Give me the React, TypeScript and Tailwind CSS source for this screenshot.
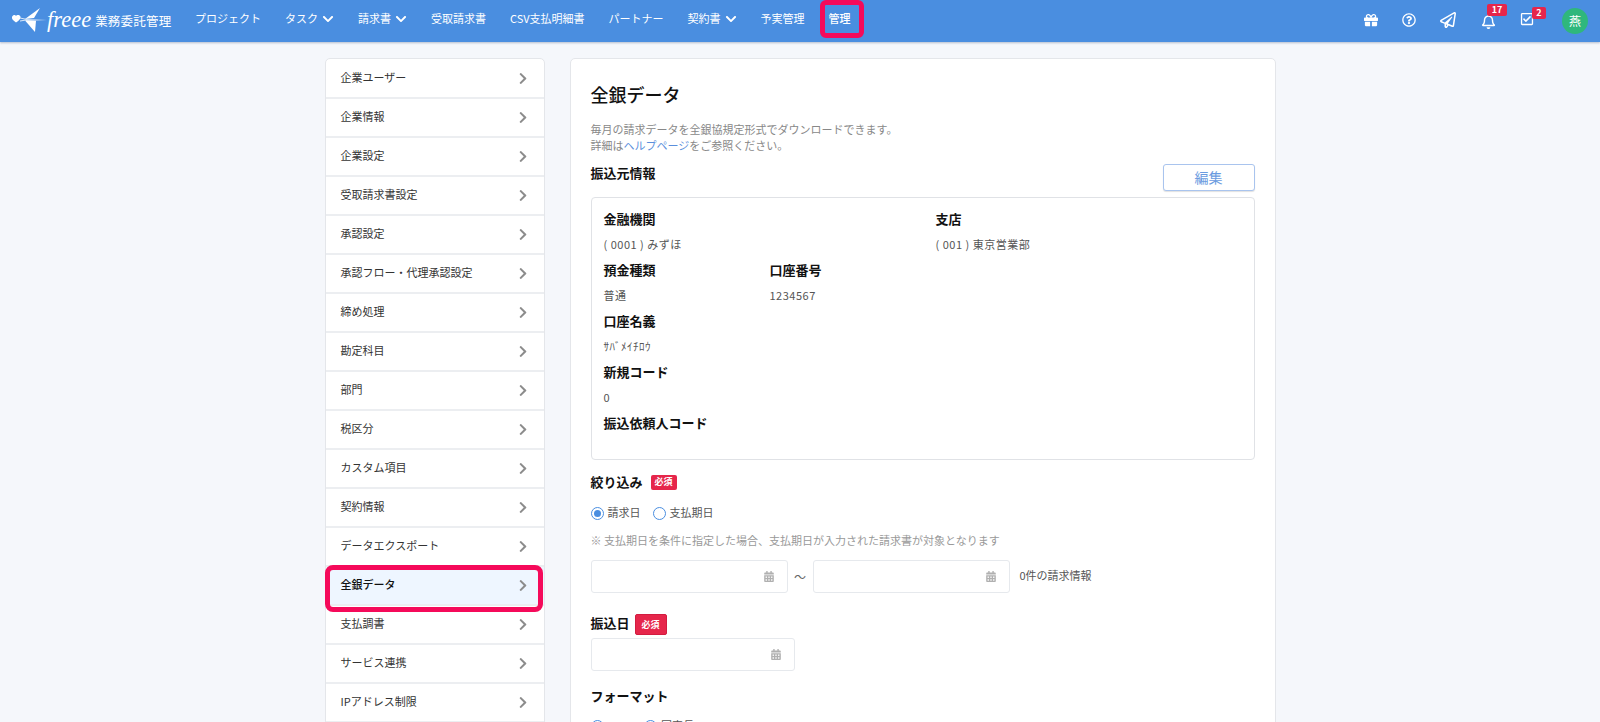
import { FaCalendarAlt, FaChevronDown, FaChevronRight, FaGift, FaRegBell, FaRegCheckSquare, FaRegPaperPlane, FaRegQuestionCircle } from 'react-icons/fa'

const navItems = [
  { label: 'プロジェクト' },
  { label: 'タスク', arrow: true },
  { label: '請求書', arrow: true },
  { label: '受取請求書' },
  { label: 'CSV支払明細書' },
  { label: 'パートナー' },
  { label: '契約書', arrow: true },
  { label: '予実管理' },
]

const menuItems = [
  '企業ユーザー',
  '企業情報',
  '企業設定',
  '受取請求書設定',
  '承認設定',
  '承認フロー・代理承認設定',
  '締め処理',
  '勘定科目',
  '部門',
  '税区分',
  'カスタム項目',
  '契約情報',
  'データエクスポート',
  '全銀データ',
  '支払調書',
  'サービス連携',
  'IPアドレス制限',
]

function Logo() {
  return (
    <div className="flex items-center w-[161px] shrink-0 -mt-[2px]">
      <svg width="36" height="28" viewBox="0 0 36 28" className="shrink-0" fill="white">
        <path d="M0 11c1-2.500 3.500-2.500 4-1 .8-1.500 4-1.500 4.500.8.3 2.200-2.500 4.200-4.500 5.700C2 15-.5 13.500 0 11z" />
        <path d="M8 12l6 1.300M8 15l6-1" stroke="white" strokeWidth="0.8" />
        <path d="M28 2L13 13l9-1z" />
        <path d="M13 14.500l11 .3L23 26z" />
        <path d="M14 13.300l21 .7-21 .8z" />
      </svg>
      <span className="text-[22.500px] leading-none italic text-white font-['Liberation_Serif',serif] -ml-[1px]">freee</span>
      <span className="ml-[4px] mt-[3px] text-[12.500px] tracking-[0.2px] text-white whitespace-nowrap">業務委託管理</span>
    </div>
  )
}

function Header() {
  return (
    <header className="h-[42px] shrink-0 flex items-center pl-[12px] pr-[12px] bg-[#4a8ee0] shadow-[0_1px_2px_rgba(60,80,120,0.35)] relative z-10">
      <Logo />
      <nav className="flex items-center gap-6 ml-[22px] -mt-[5px] text-[11px] text-white">
        {navItems.map((item) => (
          <div key={item.label} className="flex items-center gap-1 whitespace-nowrap">
            <span>{item.label}</span>
            {item.arrow && <FaChevronDown className="w-[12px] h-[12px]" />}
          </div>
        ))}
        <div className="relative font-medium">
          <span>管理</span>
          <div className="absolute -left-[9px] -right-[13px] -top-[10px] h-[38px] border-[5px] border-[#f50a5a] rounded-[6px]"></div>
        </div>
      </nav>
      <div className="ml-auto -mt-[3px] flex items-center text-white">
        <FaGift className="w-[14px] h-[14px]" />
        <FaRegQuestionCircle className="w-[14px] h-[14px] ml-[24px]" />
        <FaRegPaperPlane className="w-[16px] h-[16px] ml-[24px]" />
        <div className="relative ml-[25px] mt-[4px]">
          <FaRegBell className="w-[15px] h-[15px]" />
          <span className="absolute -top-[10px] left-[6px] w-[20px] h-[12px] rounded-[2px] bg-[#e6264b] text-[9px] leading-[11px] font-bold text-center">17</span>
        </div>
        <div className="relative ml-[24px] -mt-[1px]">
          <FaRegCheckSquare className="w-[14px] h-[14px]" />
          <span className="absolute -top-[5px] left-[12px] w-[14px] h-[12px] rounded-[2px] bg-[#e6264b] text-[9px] leading-[11px] font-bold text-center">2</span>
        </div>
        <div className="ml-[28px] mt-[2px] w-[26px] h-[26px] rounded-full bg-[#2fb77c] flex items-center justify-center text-[12px]">燕</div>
      </div>
    </header>
  )
}

function Sidebar() {
  return (
    <aside className="w-[220px] shrink-0 self-start bg-white border border-[#e4e6ea] rounded-t-[5px] pt-px">
      {menuItems.map((item) => {
        const active = item === '全銀データ'
        return (
          <div
            key={item}
            className={`relative h-[39px] flex items-center justify-between pl-[15px] pr-[16px] border-b-2 border-[#eceef1] text-[11px] ${active ? 'bg-[#eef6ff] text-[#111] font-medium' : 'text-[#333]'}`}
          >
            <span className="-mt-[2px]">{item}</span>
            <FaChevronRight className="w-[10px] h-[13px] text-[#8c8c8c]" />
            {active && <div className="absolute -left-px right-px -top-[2px] h-[47px] border-[5px] border-[#f50a5a] rounded-[8px] z-10"></div>}
          </div>
        )
      })}
    </aside>
  )
}

function Required({ big }: { big?: boolean }) {
  return (
    <span className={`inline-flex items-center justify-center bg-[#e6264b] text-white font-bold rounded-[2px] text-[9px] ${big ? 'w-[32px] h-[21px] border border-[#d21c40]' : 'w-[26px] h-[15px]'}`}>
      必須
    </span>
  )
}

function Field({ label, value }: { label: string; value?: string }) {
  return (
    <div className="h-[51px]">
      <div className="h-[25px] leading-[25px] text-[13px] font-bold text-[#111]">{label}</div>
      {value && <div className="h-[26px] leading-[26px] text-[11px] tracking-[0.5px] text-[#555]">{value}</div>}
    </div>
  )
}

function Radio({ label, checked }: { label: string; checked?: boolean }) {
  return (
    <label className="flex items-center gap-[4px] text-[11px] text-[#555]">
      <span className="w-[13px] h-[13px] rounded-full border border-[#4a8ee0] flex items-center justify-center bg-white">
        {checked && <span className="w-[7px] h-[7px] rounded-full bg-[#4a8ee0]"></span>}
      </span>
      <span className="-mt-[2px]">{label}</span>
    </label>
  )
}

function DateInput({ width }: { width: string }) {
  return (
    <div className={`h-[33px] shrink-0 flex items-center justify-end pr-[13px] bg-white border border-[#e6e9ed] rounded-[3px] ${width}`}>
      <FaCalendarAlt className="w-[10px] h-[11px] text-[#b0b0b0]" />
    </div>
  )
}

function MainPanel() {
  return (
    <main className="w-[706px] shrink-0 bg-white border border-[#e4e6ea] rounded-t-[5px] px-[20px] pt-[23px]">
      <h1 className="text-[18px] leading-[24px] font-medium text-[#111]">全銀データ</h1>
      <p className="mt-4 text-[11px] leading-[15.500px] text-[#888]">
        毎月の請求データを全銀協規定形式でダウンロードできます。
        <br />
        詳細は<span className="text-[#5b8fdc]">ヘルプページ</span>をご参照ください。
      </p>
      <div className="mt-[11px] flex items-start justify-between">
        <h2 className="-mt-px text-[13px] leading-[20px] font-bold text-[#111]">振込元情報</h2>
        <button className="w-[92px] h-[27px] bg-white border border-[#a9c4ee] rounded-[3px] text-[14px] text-[#6b9be0] shadow-[0_1px_1px_rgba(0,0,0,0.12)]">編集</button>
      </div>
      <div className="mt-[6px] h-[263px] border border-[#e0e2e6] rounded-[4px] px-3 pt-[8px]">
        <div className="grid grid-cols-[166px_166px_1fr]">
          <Field label="金融機関" value="( 0001 ) みずほ" />
          <div className="col-start-3">
            <Field label="支店" value="( 001 ) 東京営業部" />
          </div>
          <div className="col-start-1">
            <Field label="預金種類" value="普通" />
          </div>
          <Field label="口座番号" value="1234567" />
          <div className="col-start-1 col-span-2">
            <Field label="口座名義" value="ｻﾊﾞﾒｲﾁﾛｳ" />
          </div>
          <div className="col-start-1 col-span-2">
            <Field label="新規コード" value="0" />
          </div>
          <div className="col-start-1 col-span-2">
            <Field label="振込依頼人コード" />
          </div>
        </div>
      </div>

      <div className="mt-3 h-[20px] flex items-center gap-[8px]">
        <h2 className="text-[13px] leading-[20px] font-bold text-[#111]">絞り込み</h2>
        <Required />
      </div>
      <div className="mt-[11px] h-[20px] flex items-center gap-[12px]">
        <Radio label="請求日" checked />
        <Radio label="支払期日" />
      </div>
      <p className="mt-[9px] text-[11px] leading-[16px] text-[#999]">※ 支払期日を条件に指定した場合、支払期日が入力された請求書が対象となります</p>
      <div className="mt-3 flex items-center">
        <DateInput width="w-[197px]" />
        <span className="w-[25px] text-center text-[12px] text-[#666]">～</span>
        <DateInput width="w-[197px]" />
        <span className="ml-[10px] -mt-[2px] text-[11px] text-[#555]">0件の請求情報</span>
      </div>

      <div className="mt-[21px] h-[21px] flex items-center gap-[5px]">
        <h2 className="-mt-[4px] text-[13px] leading-[20px] font-bold text-[#111]">振込日</h2>
        <Required big />
      </div>
      <div className="mt-[3px]">
        <DateInput width="w-[204px]" />
      </div>

      <h2 className="mt-[15px] text-[13px] leading-[20px] font-bold text-[#111]">フォーマット</h2>
      <div className="mt-[10px] h-[20px] flex items-center gap-[20px]">
        <Radio label="csv" checked />
        <Radio label="固定長" />
      </div>
    </main>
  )
}

export default function App() {
  return (
    <div className="h-[722px] overflow-hidden flex flex-col bg-[#f5f7fb] font-['Noto_Sans_CJK_JP','Noto_Sans',sans-serif]">
      <Header />
      <div className="mt-[16px] flex justify-center gap-[25px]">
        <Sidebar />
        <MainPanel />
      </div>
    </div>
  )
}
